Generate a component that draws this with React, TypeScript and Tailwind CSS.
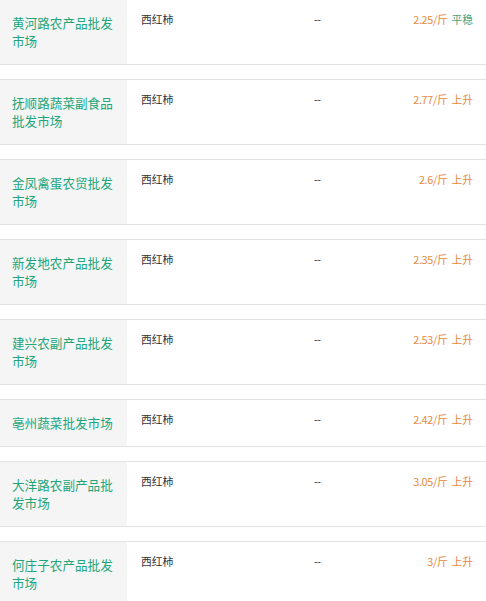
type Market = {
  name: string;
  price: string;
  trend: string;
};

const markets: Market[] = [
  { name: "黄河路农产品批发市场", price: "2.25", trend: "平稳" },
  { name: "抚顺路蔬菜副食品批发市场", price: "2.77", trend: "上升" },
  { name: "金凤禽蛋农贸批发市场", price: "2.6", trend: "上升" },
  { name: "新发地农产品批发市场", price: "2.35", trend: "上升" },
  { name: "建兴农副产品批发市场", price: "2.53", trend: "上升" },
  { name: "亳州蔬菜批发市场", price: "2.42", trend: "上升" },
  { name: "大洋路农副产品批发市场", price: "3.05", trend: "上升" },
  { name: "何庄子农产品批发市场", price: "3", trend: "上升" },
];

export default function App() {
  return (
    <div
      className="w-[486px] h-[601px] overflow-hidden bg-white"
      style={{ fontFamily: '"Noto Sans CJK SC", "Noto Sans", sans-serif' }}
    >
      <div className="-mt-px">
        {markets.map((m) => (
          <div key={m.name} className="flex border-y border-[#e2e2e2] mb-[14px]">
            <div className="w-[127px] shrink-0 bg-[#f5f5f5] pl-[12px] pr-[8px] py-[14px] flex items-center text-[12.6px] leading-[18px] text-[#20a67a]">
              {m.name}
            </div>
            <div className="flex-1 grid grid-cols-[187px_1fr_auto] pt-[10px] pr-[13px] text-[10.8px] leading-[18px] self-start">
              <span className="pl-[14px] text-[#333]">西红柿</span>
              <span className="text-[#333] tracking-[-0.5px]">--</span>
              <span className="text-right">
                <span className="text-[#e8893a] tracking-[-0.3px]">{m.price}/斤</span>
                <span
                  className={m.trend === "平稳" ? "ml-[4px] text-[#4f9f79]" : "ml-[4px] text-[#e8893a]"}
                >
                  {m.trend}
                </span>
              </span>
            </div>
          </div>
        ))}
      </div>
    </div>
  );
}
